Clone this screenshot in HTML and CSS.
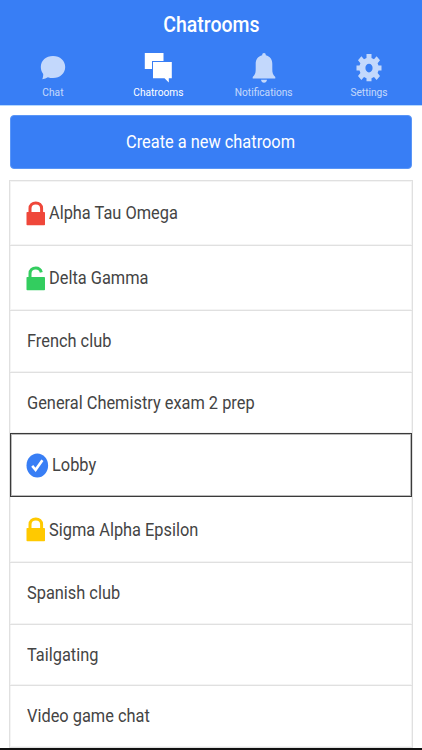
FILE: index.html
```html
<!DOCTYPE html>
<html lang="en">
<head>
  <meta charset="UTF-8">
  <meta name="viewport" content="width=device-width, initial-scale=1.0">
  <title>Chatrooms</title>
  <link rel="stylesheet" href="styles.css">
</head>
<body>
  <header class="bar">
    <h1 class="title"><span>Chatrooms</span></h1>
    <nav class="tabs">
      <a class="tab">
        <svg width="26" height="30" viewBox="0 0 26 30"><path d="M13 3C6 3 .8 7.600.8 14c0 3 1.100 5.200 2.400 7 .1 1.800-.3 3.700-.9 5.200 2.200-.4 4.100-1.100 5.600-2 1.600.6 3.200.9 5.100.9 7.200 0 12.200-5 12.200-11.100S20.200 3 13 3z"/></svg>
        <span>Chat</span>
      </a>
      <a class="tab active">
        <svg width="28" height="30" viewBox="0 0 28 30"><path d="M.8 0H19.500V8H8V16H.8z"/><path d="M9 9H27.800V25.300H24.800V29.500L20.500 25.300H9z"/></svg>
        <span>Chatrooms</span>
      </a>
      <a class="tab">
        <svg width="24" height="30" viewBox="0 0 24 30"><path d="M12 0c-1.200 0-1.800.9-1.800 2.300C6 3.300 3.700 6.500 3.700 11v5c0 3.500-.4 5.600-3 8V25.500H23.300V24c-2.600-2.400-3-4.500-3-8v-5c0-4.500-2.300-7.700-6.500-8.700C13.800.9 13.200 0 12 0z"/><path d="M9 26.800h6c-.3 1.800-1.400 2.900-3 2.900s-2.700-1.100-3-2.900z"/></svg>
        <span>Notifications</span>
      </a>
      <a class="tab">
        <svg width="26" height="30" viewBox="0 0 26 30"><path fill-rule="evenodd" d="M10.500 1h5v4l2.500 1.200 2.600-3L24 7.300l-2.400 3 .9 2.300h3v5h-3l-.9 2.400 2.400 3-3.400 4-2.600-3-2.500 1.200v3h-5v-3L8 24l-2.600 3L2 23l2.400-3-.9-2.400h-3v-5h3l.9-2.300-2.400-3 3.400-4.100 2.600 3L10.500 5zM13 10.800c-2 0-3.600 1.900-3.600 4.300s1.600 4.300 3.600 4.300 3.600-1.900 3.600-4.300-1.600-4.300-3.600-4.300z"/></svg>
        <span>Settings</span>
      </a>
    </nav>
  </header>

  <main class="content">
    <button class="create"><span>Create a new chatroom</span></button>

    <ul class="list">
      <li class="item with-icon">
        <svg class="lock red" width="20" height="25" viewBox="0 0 20 25"><path class="shackle" d="M4 12V7.500C4 4 6.500 2 9.800 2s5.800 2 5.800 5.500V12"/><rect x=".5" y="11" width="18.500" height="13.300" rx=".8"/></svg>
        <span>Alpha Tau Omega</span>
      </li>
      <li class="item with-icon">
        <svg class="lock green" width="20" height="25" viewBox="0 0 20 25"><path class="shackle" d="M4 12V7.500C4 4 6.500 2 9.800 2c2.600 0 4.700 1.200 5.500 4.400"/><rect x=".5" y="11" width="18.500" height="13.300" rx=".8"/></svg>
        <span>Delta Gamma</span>
      </li>
      <li class="item"><span>French club</span></li>
      <li class="item"><span>General Chemistry exam 2 prep</span></li>
      <li class="item with-icon selected">
        <svg class="check" width="23" height="25" viewBox="0 0 23 25"><ellipse cx="11.300" cy="12.400" rx="10.800" ry="12"/><path d="M6.200 12.800l3.400 4 6.800-9.500"/></svg>
        <span>Lobby</span>
      </li>
      <li class="item with-icon after">
        <svg class="lock yellow" width="20" height="25" viewBox="0 0 20 25"><path class="shackle" d="M4 12V7.500C4 4 6.500 2 9.800 2s5.800 2 5.800 5.500V12"/><rect x=".5" y="11" width="18.500" height="13.300" rx=".8"/></svg>
        <span>Sigma Alpha Epsilon</span>
      </li>
      <li class="item"><span>Spanish club</span></li>
      <li class="item"><span>Tailgating</span></li>
      <li class="item"><span>Video game chat</span></li>
    </ul>
  </main>
  <footer class="bottom"></footer>
</body>
</html>
```

FILE: styles.css
```css
* {
  box-sizing: border-box;
}

body {
  margin: 0;
  height: 750px;
  display: flex;
  flex-direction: column;
  overflow: hidden;
  background: #fff;
  color: #444;
  font-family: Roboto, "Liberation Sans", sans-serif;
}

/* narrow lettering */
.title span,
.tab span,
.create span,
.item span {
  display: inline-block;
  white-space: nowrap;
  transform: scaleX(0.885);
}

.bar {
  height: 106px;
  flex: none;
  background: #387ef5;
  border-bottom: 1px solid #b5d8fd;
  color: #fff;
}

.title {
  margin: 0;
  height: 53px;
  line-height: 49px;
  font-size: 22px;
  font-weight: 500;
  text-align: center;
}

.tabs {
  display: flex;
}

.tab {
  flex: 1;
  display: flex;
  flex-direction: column;
  align-items: center;
  opacity: 0.7;
}

.tab.active {
  opacity: 1;
}

.tab svg {
  display: block;
  fill: currentColor;
}

.tab span {
  margin-top: 2px;
  font-size: 11.5px;
  line-height: 15px;
}

.content {
  flex: 1;
  min-height: 0;
  padding: 9px 9px 0;
}

.create {
  display: block;
  width: 402px;
  height: 54px;
  margin: 0 1px;
  padding: 0;
  border: 1px solid #5a96f7;
  border-radius: 4px;
  background: #387ef5;
  color: #fff;
  font-family: inherit;
  font-size: 18.5px;
}

.list {
  width: 404px;
  margin: 11px 0 0;
  padding: 0;
  list-style: none;
  border: 1px solid #e0e0e0;
  box-shadow: inset 0 0 0 1px #f4f4f4;
}

.item {
  display: flex;
  align-items: center;
  height: 61.500px;
  padding: 0 16.500px;
  border-bottom: 1px solid #e0e0e0;
  box-shadow: inset 0 -1px #f4f4f4;
  font-size: 18.5px;
}

.item span {
  transform-origin: left;
}

.item:last-child {
  height: 60.500px;
  border-bottom: 0;
}

.with-icon {
  height: 65px;
  padding: 0 16px;
}

.item svg {
  flex: none;
  margin-right: 3px;
}

.lock {
  fill: currentColor;
}

.shackle {
  fill: none;
  stroke: currentColor;
  stroke-width: 3;
}

.red {
  color: #ef473a;
}

.green {
  color: #33cd5f;
}

.yellow {
  color: #ffc900;
}

.selected {
  height: 64px;
  margin-top: -1px;
  padding: 0 15px;
  border: 1px solid #3a3a3a;
  box-shadow: inset 0 0 0 1px #bbb;
}

.after {
  height: 66px;
}

.check {
  fill: #387ef5;
}

.check path {
  fill: none;
  stroke: #fff;
  stroke-width: 2.600;
}

.bottom {
  flex: none;
  height: 2px;
  background: #111;
}
```
